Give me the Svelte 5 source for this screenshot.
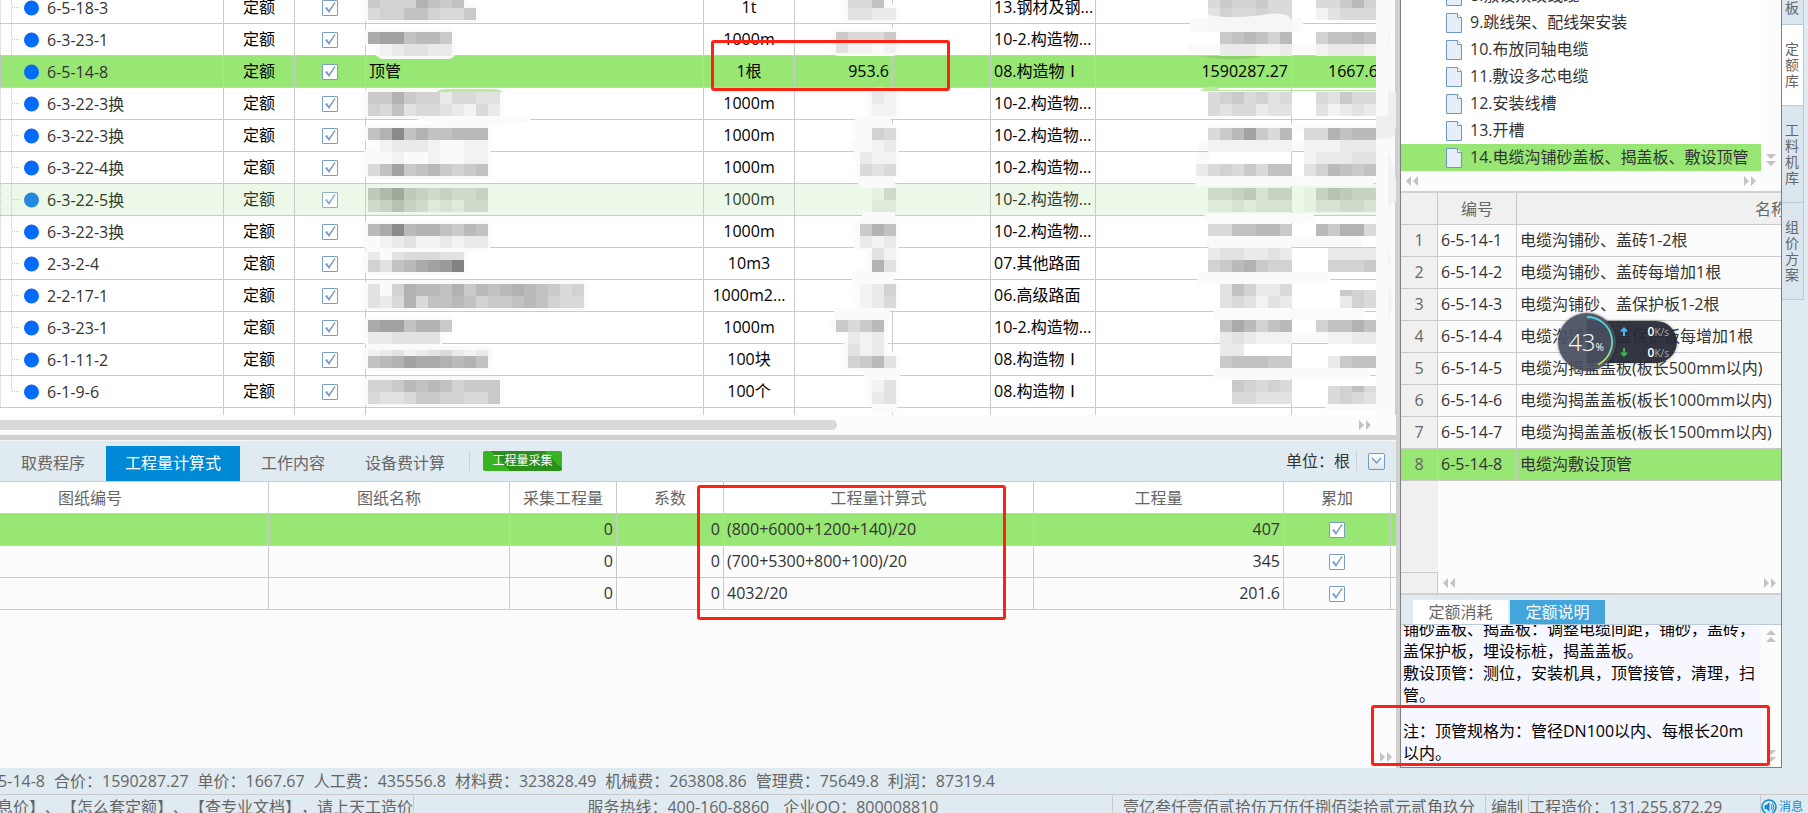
<script lang="ts">
	type Patch = { x: number; y: number; cells: string; green?: boolean };

	const items = [
		{ code: '6-5-18-3', name: '', unit: '1t', kind: '13.钢材及钢...' },
		{ code: '6-3-23-1', name: '', unit: '1000m', kind: '10-2.构造物...' },
		{ code: '6-5-14-8', name: '顶管', unit: '1根', qty: '953.6', kind: '08.构造物Ⅰ', total: '1590287.27', price: '1667.67', state: 'selected' },
		{ code: '6-3-22-3换', name: '', unit: '1000m', kind: '10-2.构造物...' },
		{ code: '6-3-22-3换', name: '', unit: '1000m', kind: '10-2.构造物...' },
		{ code: '6-3-22-4换', name: '', unit: '1000m', kind: '10-2.构造物...' },
		{ code: '6-3-22-5换', name: '', unit: '1000m', kind: '10-2.构造物...', state: 'hovered' },
		{ code: '6-3-22-3换', name: '', unit: '1000m', kind: '10-2.构造物...' },
		{ code: '2-3-2-4', name: '', unit: '10m3', kind: '07.其他路面' },
		{ code: '2-2-17-1', name: '', unit: '1000m2...', kind: '06.高级路面' },
		{ code: '6-3-23-1', name: '', unit: '1000m', kind: '10-2.构造物...' },
		{ code: '6-1-11-2', name: '', unit: '100块', kind: '08.构造物Ⅰ' },
		{ code: '6-1-9-6', name: '', unit: '100个', kind: '08.构造物Ⅰ' }
	];

	const formulas = [
		{ expr: '(800+6000+1200+140)/20', value: '407' },
		{ expr: '(700+5300+800+100)/20', value: '345' },
		{ expr: '4032/20', value: '201.6' }
	];

	const chapters = [
		'8.敷设双绞线缆',
		'9.跳线架、配线架安装',
		'10.布放同轴电缆',
		'11.敷设多芯电缆',
		'12.安装线槽',
		'13.开槽',
		'14.电缆沟铺砂盖板、揭盖板、敷设顶管'
	];

	const quotas = [
		'电缆沟铺砂、盖砖1-2根',
		'电缆沟铺砂、盖砖每增加1根',
		'电缆沟铺砂、盖保护板1-2根',
		'电缆沟铺砂、盖保护板每增加1根',
		'电缆沟揭盖盖板(板长500mm以内)',
		'电缆沟揭盖盖板(板长1000mm以内)',
		'电缆沟揭盖盖板(板长1500mm以内)',
		'电缆沟敷设顶管'
	];

	const costs = [
		['合价', '1590287.27'],
		['单价', '1667.67'],
		['人工费', '435556.8'],
		['材料费', '323828.49'],
		['机械费', '263808.86'],
		['管理费', '75649.8'],
		['利润', '87319.4']
	];

	const tabs = ['取费程序', '工程量计算式', '工作内容', '设备费计算'];
	const sideTabs = ['定额库', '工料机库', '组价方案'];

	// masked values: one hex digit per 12px block, 0 is dark and f is nearly white
	const patches: Patch[] = [
		{ x: 368, y: -4, cells: '9aaa6898' },
		{ x: 368, y: 8, cells: 'baa88abb9' },
		{ x: 368, y: 32, cells: '5448779' },
		{ x: 380, y: 44, cells: 'edccdd' },
		{ x: 368, y: 92, cells: '9969aadbbcc' },
		{ x: 368, y: 104, cells: 'ab8cbbcdebd' },
		{ x: 368, y: 128, cells: '8618688777' },
		{ x: 380, y: 140, cells: 'edddeffee' },
		{ x: 368, y: 152, cells: 'ffeffeffee' },
		{ x: 368, y: 164, cells: 'b849879a98' },
		{ x: 368, y: 188, cells: '86489a9aa9', green: true },
		{ x: 368, y: 200, cells: 'a979acbcaa', green: true },
		{ x: 368, y: 224, cells: '7517668978' },
		{ x: 368, y: 236, cells: 'fedceededd' },
		{ x: 368, y: 252, cells: 'dfcbbbcc' },
		{ x: 368, y: 260, cells: 'ac875430' },
		{ x: 368, y: 284, cells: 'cfa6778697876789ba' },
		{ x: 368, y: 296, cells: 'cdb6b8878a99878abb' },
		{ x: 368, y: 320, cells: '5448669' },
		{ x: 368, y: 332, cells: 'ddcccc' },
		{ x: 368, y: 350, cells: 'edcedcbded' },
		{ x: 368, y: 356, cells: '8764556768' },
		{ x: 368, y: 380, cells: 'aa97878a999' },
		{ x: 368, y: 392, cells: 'bccb99aabb9' },
		{ x: 848, y: -4, cells: 'bb8' },
		{ x: 848, y: 8, cells: 'ccdd' },
		{ x: 836, y: 32, cells: '9bbb9' },
		{ x: 836, y: 41, cells: 'ceefe' },
		{ x: 872, y: 92, cells: 'de' },
		{ x: 872, y: 104, cells: 'ee' },
		{ x: 860, y: 128, cells: 'fab' },
		{ x: 860, y: 140, cells: 'fed' },
		{ x: 860, y: 152, cells: 'dee' },
		{ x: 860, y: 164, cells: 'bcb' },
		{ x: 872, y: 188, cells: 'da', green: true },
		{ x: 872, y: 200, cells: 'cc', green: true },
		{ x: 860, y: 224, cells: '968' },
		{ x: 860, y: 236, cells: 'ded' },
		{ x: 872, y: 248, cells: 'ce' },
		{ x: 872, y: 260, cells: '6c' },
		{ x: 860, y: 284, cells: 'eda' },
		{ x: 860, y: 296, cells: 'edb' },
		{ x: 836, y: 320, cells: '9b97' },
		{ x: 848, y: 332, cells: 'ded' },
		{ x: 848, y: 344, cells: 'ced' },
		{ x: 848, y: 356, cells: 'a97c' },
		{ x: 872, y: 380, cells: 'ec' },
		{ x: 872, y: 392, cells: 'dc' },
		{ x: 1208, y: -4, cells: 'b9aa9bb' },
		{ x: 1208, y: 8, cells: 'cabbabb' },
		{ x: 1220, y: 32, cells: '9878a7a'.slice(0, 6) },
		{ x: 1220, y: 44, cells: 'dddeed' },
		{ x: 1208, y: 92, cells: 'ba9bacb' },
		{ x: 1208, y: 104, cells: 'bcbbdcc' },
		{ x: 1208, y: 128, cells: 'b9749b7' },
		{ x: 1208, y: 140, cells: 'eeeeeee' },
		{ x: 1196, y: 164, cells: 'dbab9b8a'.slice(0, 7) + '8' },
		{ x: 1208, y: 188, cells: 'aa98b99', green: true },
		{ x: 1208, y: 200, cells: 'ccbcbbb', green: true },
		{ x: 1208, y: 224, cells: 'bb88779' },
		{ x: 1208, y: 248, cells: 'dccddcd' },
		{ x: 1208, y: 260, cells: 'a9769aa' },
		{ x: 1220, y: 284, cells: 'c8addb' },
		{ x: 1220, y: 296, cells: 'cbcecd' },
		{ x: 1220, y: 320, cells: '857a87' },
		{ x: 1220, y: 332, cells: 'dcdeee' },
		{ x: 1220, y: 344, cells: 'dd' },
		{ x: 1220, y: 356, cells: '988899' },
		{ x: 1232, y: 380, cells: '9abab' },
		{ x: 1232, y: 392, cells: 'bbccc' },
		{ x: 1316, y: -4, cells: 'bb97a' },
		{ x: 1316, y: 8, cells: 'ecbbb' },
		{ x: 1316, y: 32, cells: 'a8878' },
		{ x: 1316, y: 44, cells: 'eddde' },
		{ x: 1316, y: 92, cells: 'bc9bb' },
		{ x: 1316, y: 104, cells: 'cedcd' },
		{ x: 1304, y: 128, cells: 'bb6877' },
		{ x: 1304, y: 140, cells: 'eeeddd' },
		{ x: 1304, y: 152, cells: 'edddcc' },
		{ x: 1304, y: 164, cells: 'ca7898' },
		{ x: 1304, y: 188, cells: 'd97899', green: true },
		{ x: 1304, y: 200, cells: 'dbbaab', green: true },
		{ x: 1316, y: 224, cells: '7966b' },
		{ x: 1328, y: 248, cells: 'dddd' },
		{ x: 1328, y: 260, cells: 'aaa9' },
		{ x: 1340, y: 290, cells: '9ab' },
		{ x: 1340, y: 296, cells: 'dab' },
		{ x: 1316, y: 320, cells: 'a8868' },
		{ x: 1328, y: 332, cells: 'eedd' },
		{ x: 1328, y: 356, cells: 'd988' },
		{ x: 1328, y: 386, cells: 'ba8b' },
		{ x: 1328, y: 392, cells: 'babc' }
	];

	// wide eraser strokes that run between the masked values
	const smears = [
		[1190, 18, 113, 14], [1187, 44, 189, 9], [1208, 124, 168, 6], [1198, 140, 142, 11],
		[1196, 152, 14, 24], [1195, 176, 110, 10], [1304, 176, 70, 10], [1204, 213, 110, 10],
		[1206, 236, 156, 11], [1208, 246, 84, 12], [1197, 272, 133, 12], [1213, 309, 152, 10],
		[1214, 332, 162, 11], [1213, 368, 157, 11], [1325, 403, 58, 8], [855, 116, 36, 12],
		[852, 140, 43, 12], [858, 176, 37, 12], [862, 212, 33, 12], [854, 236, 42, 14],
		[852, 270, 42, 14], [834, 308, 56, 12], [848, 332, 40, 22], [864, 368, 36, 12],
		[872, 380, 25, 33]
	];

	function shade(digit: string, green?: boolean) {
		const level = 130 + parseInt(digit, 16) * 8;
		return green ? `rgb(${level - 4}, ${level + 8}, ${level - 8})` : `rgb(${level}, ${level}, ${level})`;
	}
</script>

{#snippet arrows(dir: 'left' | 'right' | 'up' | 'down')}
	<svg class="arrows" width="14" height="14" viewBox="0 0 14 14" aria-hidden="true">
		<g transform="rotate({{ right: 0, down: 90, left: 180, up: 270 }[dir]} 7 7)">
			<path d="M1 2l5 5-5 5zM8 2l5 5-5 5z" fill="#c3c3c3" />
		</g>
	</svg>
{/snippet}

<div class="app">
	<div class="workspace">
		<main class="left">
			<section class="budget">
				<div class="grid-view">
					<table class="grid items">
						<colgroup>
							<col style:width="224px" /><col style:width="71px" /><col style:width="71px" />
							<col style:width="338px" /><col style:width="91px" /><col style:width="98px" />
							<col style:width="98px" /><col style:width="105px" /><col style:width="196px" /><col />
						</colgroup>
						<tbody>
							{#each items as item, i}
								<tr class={item.state}>
									<td class="tree-cell">
										<div class="node">
											<svg width="47" height="31" viewBox="0 0 47 31" aria-hidden="true">
												<g stroke="#c8c8c8" stroke-dasharray="1 1">
													<path d="M.5 0v31" />
													<path d={i === items.length - 1 ? 'M11.5 0v15.5' : 'M11.5 0v31'} />
													<path d="M12 15.5h8" />
												</g>
												<circle cx="31.5" cy="16" r="7.5" fill={item.state === 'hovered' ? '#2487e0' : '#006cf7'} />
											</svg>
											<span>{item.code}</span>
										</div>
									</td>
									<td class="center">定额</td>
									<td class="center check-cell"><input type="checkbox" checked aria-label={item.code} /></td>
									<td>{item.name}</td>
									<td class="center">{item.unit}</td>
									<td class="right">{item.qty ?? ''}</td>
									<td></td>
									<td>{item.kind}</td>
									<td class="right">{item.total ?? ''}</td>
									<td class="price">{item.price ?? ''}</td>
								</tr>
							{/each}
							<tr class="stub">
								{#each Array(10) as _}<td></td>{/each}
							</tr>
						</tbody>
					</table>
				</div>
				<div class="gutter"></div>

				<svg class="mask" aria-hidden="true">
					<g fill="#fafafa">
						{#each patches as p}
							{#if !p.green && p.x < 1190}
								<rect x={p.x - 5} y={p.y - 4} width={p.cells.length * 12 + 9} height="19" rx="8" />
							{/if}
						{/each}
						{#each smears as [x, y, width, height]}
							<rect {x} {y} {width} {height} rx="4" />
						{/each}
						<rect x="1376" y="0" width="19" height="415" />
						<path d="M1388 91q13 0 13 14l-7 30q-3 6-18 3v-22h12z" fill="#eeefef" />
						<path d="M1388 154q9 14 9 45q-3 7-9 7z" fill="#f1f2f2" />
						<path d="M1388 32q5 7 0 14zM1388 250q6 8 0 16zM1388 286q10 10 0 34z" fill="#f3f4f4" />
						<path d="M415 119q60-6 116-2q2 6-20 7q-60 4-96-5z" />
					</g>
					{#each patches as p}
						{#each p.cells.split('') as c, i}
							<rect x={p.x + i * 12} y={p.y} width="12" height="12" fill={shade(c, p.green)} />
						{/each}
					{/each}
					<path d="M1208 15q30 5 60-1q20-2 24 6v12h-84z" fill="#f6f6f6" />
					<path d="M436 92q4-3 10-3h46q8 0 11 3z" fill="#b9eba0" />
					<path d="M866 91q14-9 25 0z" fill="#b9eba0" />
					<path d="M1200 91q10-9 20-1h156v1z" fill="#b9eba0" />
					<path d="M1200 56h62q-24 6-54 1z" fill="#8bd068" />
				</svg>
				<div class="marker unit-marker"></div>
			</section>

			<div class="hscroll">
				<div class="thumb"></div>
				{@render arrows('right')}
			</div>

			<section class="detail">
				<nav class="tabbar">
					{#each tabs as tab, i}
						<button type="button" class={['tab', i === 1 && 'active']}>{tab}</button>
					{/each}
					<span class="divider"></span>
					<button type="button" class="collect">工程量采集</button>
					<span class="unit">单位：根</span>
					<span class="divider"></span>
					<button type="button" class="expand" aria-label="展开">
						<svg width="11" height="8" viewBox="0 0 11 8"><path d="M1 1l4.500 5L10 1" fill="none" stroke="#6f9ac8" stroke-width="1.500" /></svg>
					</button>
				</nav>
				<div class="formulas">
					<table class="grid">
						<colgroup>
							<col style:width="269px" /><col style:width="241px" /><col style:width="107px" />
							<col style:width="107px" /><col style:width="310px" /><col style:width="250px" />
							<col style:width="107px" /><col />
						</colgroup>
						<thead>
							<tr>
								<th class="offset">图纸编号</th>
								<th>图纸名称</th>
								<th>采集工程量</th>
								<th>系数</th>
								<th>工程量计算式</th>
								<th>工程量</th>
								<th>累加</th>
								<th></th>
							</tr>
						</thead>
						<tbody>
							{#each formulas as f, i}
								<tr class={{ selected: i === 0 }}>
									<td></td>
									<td></td>
									<td class="right">0</td>
									<td class="right">0</td>
									<td>{f.expr}</td>
									<td class="right">{f.value}</td>
									<td class="center check-cell"><input type="checkbox" checked aria-label="累加" /></td>
									<td></td>
								</tr>
							{/each}
						</tbody>
					</table>
					<div class="marker formula-marker"></div>
					<div class="corner">{@render arrows('right')}</div>
				</div>
			</section>
		</main>

		<aside class="library">
			<div class="chapters">
				<ul>
					{#each chapters as chapter, i}
						<li class={{ selected: i === chapters.length - 1 }}>
							<svg width="16" height="20" viewBox="0 0 16 20" aria-hidden="true">
								<path d="M.5.5h11l4 4v15H.5z" fill="#e6eef9" stroke="#6f97c4" />
								<path d="M11.500.5v4h4" fill="#fff" stroke="#6f97c4" />
							</svg>
							<span>{chapter}</span>
						</li>
					{/each}
				</ul>
				<div class="vscroll">{@render arrows('down')}</div>
			</div>
			<div class="pager">{@render arrows('left')}{@render arrows('right')}</div>

			<div class="quotas">
				<table class="grid">
					<colgroup><col style:width="37px" /><col style:width="79px" /><col /></colgroup>
					<thead>
						<tr><th></th><th>编号</th><th class="name-head">名称</th></tr>
					</thead>
					<tbody>
						{#each quotas as quota, i}
							<tr class={{ selected: i === quotas.length - 1 }}>
								<td class="num">{i + 1}</td>
								<td>6-5-14-{i + 1}</td>
								<td>{quota}</td>
							</tr>
						{/each}
					</tbody>
				</table>
				<div class="rest"></div>
				<div class="pager foot">{@render arrows('left')}{@render arrows('right')}</div>
			</div>

			<nav class="note-tabs">
				<button type="button">定额消耗</button>
				<button type="button" class="active">定额说明</button>
			</nav>
			<div class="notes">
				<div class="note-text">
					<p>铺砂盖板、揭盖板：调整电缆间距，铺砂，盖砖，盖保护板，埋设标桩，揭盖盖板。</p>
					<p>敷设顶管：测位，安装机具，顶管接管，清理，扫管。</p>
					<p class="remark">注：顶管规格为：管径DN100以内、每根长20m以内。</p>
				</div>
				<div class="vscroll both">{@render arrows('up')}{@render arrows('down')}</div>
				<div class="marker note-marker"></div>
			</div>

			<div class="speed">
				<div class="rates">
					<svg width="8" height="9" viewBox="0 0 8 9"><path d="M4 9V2M1 4.500l3-3 3 3" fill="none" stroke="#4ab6f5" stroke-width="2" /></svg>
					<span><b>0</b>K/s</span>
					<svg width="8" height="9" viewBox="0 0 8 9"><path d="M4 0v7M1 4.500l3 3 3-3" fill="none" stroke="#37b34a" stroke-width="2" /></svg>
					<span><b>0</b>K/s</span>
				</div>
				<div class="ball">
					<svg width="58" height="58" viewBox="0 0 58 58" aria-hidden="true">
						<defs>
							<linearGradient id="ring" x1="0" y1="0" x2="0" y2="1">
								<stop offset="0" stop-color="#3fd9e6" />
								<stop offset="0.600" stop-color="#66dfa8" />
								<stop offset="1" stop-color="#c8e05a" />
							</linearGradient>
						</defs>
						<path d="M29 4a25 25 0 0 1 11 47.500" fill="none" stroke="url(#ring)" stroke-width="1.800" />
					</svg>
					<span>43<small>%</small></span>
				</div>
			</div>
		</aside>

		<nav class="side">
			<button type="button" class="first">板</button>
			{#each sideTabs as tab, i}
				<button type="button" class={{ active: i === 0 }}>{tab}</button>
			{/each}
		</nav>
	</div>

	<footer>
		<div class="costs">
			<span class="code">6-5-14-8</span>
			{#each costs as [label, value]}
				<span>{label}：{value}</span>
			{/each}
		</div>
		<div class="status">
			<span class="tips">息价】、【怎么套定额】、【查专业文档】，请上天工造价</span>
			<span class="contact"><span>服务热线：400-160-8860</span><span>企业QQ：800008810</span></span>
			<span class="words">壹亿叁仟壹佰贰拾伍万伍仟捌佰柒拾贰元贰角玖分</span>
			<span class="mode">编制</span>
			<span class="sum">工程造价：131,255,872.29</span>
			<a href="#messages">
				<svg width="16" height="16" viewBox="0 0 16 16" aria-hidden="true">
					<circle cx="8" cy="8" r="7" fill="none" stroke="#0b8ad6" stroke-width="1.500" />
					<path d="M3.500 6h2l3-3v10l-3-3h-2z" fill="#0b8ad6" />
					<path d="M10 5.500q2 2.500 0 5M11.500 4q3 4 0 8" fill="none" stroke="#0b8ad6" />
				</svg>消息
			</a>
		</div>
	</footer>
</div>

<style>
	:global(body) {
		margin: 0;
	}

	.app {
		--line: #cacaca;
		--green: #98e673;
		--pale: #e0eaf1;
		min-height: 100vh;
		display: flex;
		flex-direction: column;
		overflow: hidden;
		background: var(--pale);
		color: #333;
		font: 16px/24px 'Open Sans', 'Noto Sans CJK SC', sans-serif;
		text-spacing-trim: space-all;
	}

	button {
		border: 0;
		padding: 0;
		font: inherit;
		color: #666;
		background: none;
	}

	.workspace {
		flex: 1;
		display: flex;
	}

	.left {
		flex: 1;
		min-width: 0;
		display: flex;
		flex-direction: column;
		border-right: 4px solid #d0d0d0;
		background: #fcfcfc;
	}

	.grid {
		width: 100%;
		table-layout: fixed;
		border-collapse: separate;
		border-spacing: 0;
	}

	.grid td,
	.grid th {
		box-sizing: border-box;
		height: 32px;
		padding: 0 3px 2px;
		overflow: hidden;
		white-space: nowrap;
		font-weight: normal;
		text-align: left;
		border-right: 1px solid var(--line);
		border-bottom: 1px solid var(--line);
	}

	.grid th {
		padding-bottom: 0;
		color: #666;
		text-align: center;
	}

	.grid .center {
		text-align: center;
	}

	.grid .right {
		text-align: right;
	}

	.grid .check-cell {
		padding: 0;
	}

	.grid .selected td {
		background: var(--green);
	}

	.grid td:last-child,
	.grid th:last-child {
		border-right: 0;
	}

	input[type='checkbox'] {
		appearance: none;
		box-sizing: border-box;
		display: block;
		width: 16px;
		height: 16px;
		margin: 0 auto;
		border: 1px solid #7a9dc4;
		border-radius: 1px;
		background: #fff url("data:image/svg+xml,%3Csvg xmlns='http://www.w3.org/2000/svg' viewBox='0 0 14 14'%3E%3Cpath d='M2 7l2-1 2 3L11.500 1l1 1L6 12z' fill='%237a9dc4'/%3E%3C/svg%3E");
	}

	.budget {
		position: relative;
		display: flex;
	}

	.grid-view {
		flex: 1;
		min-width: 0;
		overflow: hidden;
		background: #fff;
	}

	.items {
		margin-top: -8px;
		color: #000;
	}

	.items .hovered td {
		background: #ecf9e8;
		color: #2c3b29;
	}

	.items .hovered input {
		opacity: 0.8;
	}

	.items .tree-cell {
		padding: 0;
		color: #333;
	}

	.items .stub td {
		height: 7px;
		padding: 0;
		border-bottom: 0;
	}

	.items .price {
		padding-left: 36px;
		text-overflow: clip;
	}

	.node {
		display: flex;
		align-items: center;
		height: 31px;
	}

	.gutter {
		box-sizing: border-box;
		width: 20px;
		border-right: 1px solid #c3cfda;
		background: #fcfcfc;
	}

	.mask {
		position: absolute;
		inset: 0;
		width: 100%;
		height: 100%;
		pointer-events: none;
	}

	.marker {
		position: absolute;
		box-sizing: border-box;
		border: 3px solid #ff2213;
		border-radius: 3px;
		pointer-events: none;
	}

	.unit-marker {
		left: 711px;
		top: 40px;
		width: 239px;
		height: 51px;
	}

	.hscroll {
		display: flex;
		align-items: center;
		justify-content: space-between;
		height: 20px;
		padding-right: 24px;
		border-bottom: 5px solid #d0d0d0;
	}

	.thumb {
		width: 61%;
		height: 10px;
		border-radius: 0 5px 5px 0;
		background: #d9d9d9;
	}

	.arrows {
		display: block;
		flex: none;
	}

	.detail {
		flex: 1;
		display: flex;
		flex-direction: column;
	}

	.tabbar {
		display: flex;
		align-items: center;
		height: 40px;
		border-top: 1px solid #f6f6f6;
		border-bottom: 1px solid #c3cfda;
		background: var(--pale);
	}

	.tab {
		align-self: flex-end;
		height: 35px;
		padding: 0 20px 2px;
	}

	.tab:first-child {
		padding-left: 21px;
	}

	.tab.active {
		margin: 0 1px;
		padding: 0 19px 2px;
		color: #fff;
		background: #0089d6;
	}

	.tab:nth-child(4) {
		padding-right: 24px;
	}

	.divider {
		width: 1px;
		height: 20px;
		background: #c9d3dc;
	}

	.collect {
		width: 79px;
		height: 20px;
		margin: 0 auto 0 13px;
		border-radius: 2px;
		font-size: 12px;
		line-height: 18px;
		color: #fff;
		background: linear-gradient(45deg, #38b321 28%, #2b901a 28%, #2b901a 82%, #38b321 82%);
	}

	.unit {
		margin-right: 6px;
	}

	.expand {
		display: grid;
		place-items: center;
		width: 17px;
		height: 17px;
		margin: 0 11px;
		border: 1px solid #6f9ac8;
		border-radius: 2px;
		background: linear-gradient(#fff, #dce6ee);
	}

	.formulas {
		position: relative;
		flex: 1;
	}

	.formulas th {
		background: #fff;
	}

	.formulas .offset {
		padding-right: 91px;
	}

	.formula-marker {
		left: 697px;
		top: 3px;
		width: 309px;
		height: 135px;
	}

	.corner {
		position: absolute;
		right: 3px;
		bottom: 4px;
	}

	.library {
		position: relative;
		flex: 0 0 380px;
		display: flex;
		flex-direction: column;
		border: solid #808080;
		border-width: 0 1px;
		background: #fcfcfc;
	}

	.chapters {
		display: flex;
		overflow: hidden;
	}

	.chapters ul {
		flex: 1;
		margin: -18px 0 0;
		padding: 0;
		list-style: none;
		background: #fff;
	}

	.chapters li {
		display: flex;
		align-items: center;
		gap: 8px;
		height: 27px;
		padding-left: 45px;
	}

	.chapters li span {
		padding-bottom: 2px;
	}

	.chapters .selected {
		background: var(--green);
	}

	.vscroll {
		display: flex;
		flex-direction: column;
		justify-content: flex-end;
		align-items: center;
		width: 20px;
		padding: 4px 0;
		box-sizing: border-box;
	}

	.vscroll.both {
		justify-content: space-between;
	}

	.pager {
		display: flex;
		align-items: center;
		justify-content: space-between;
		height: 20px;
		padding: 0 24px 0 4px;
		border-bottom: 2px solid #d0d0d0;
	}

	.quotas {
		flex: 1;
		display: flex;
		flex-direction: column;
	}

	.quotas th,
	.quotas .num {
		background: #f0f0f0;
	}

	.quotas .num {
		color: #666;
		text-align: center;
	}

	.quotas .name-head {
		padding-left: 238px;
		text-align: left;
	}

	.rest {
		flex: 1;
		width: 37px;
		box-sizing: border-box;
		border-bottom: 1px solid var(--line);
		background: #f0f0f0;
	}

	.pager.foot {
		padding: 0 4px 0 41px;
		background: linear-gradient(90deg, #f0f0f0 36px, var(--line) 36px, var(--line) 37px, transparent 37px);
	}

	.note-tabs {
		display: flex;
		gap: 2px;
		padding: 5px 12px 0;
		border-bottom: 1px solid #b9cbd9;
		background: var(--pale);
	}

	.note-tabs button {
		width: 95px;
		height: 24px;
		background: #fff;
	}

	.note-tabs .active {
		color: #fff;
		background: #42a6dd;
	}

	.notes {
		position: relative;
		display: flex;
		height: 142px;
		border-bottom: 1px solid #808080;
	}

	.note-text {
		flex: 1;
		overflow: hidden;
		padding: 0 5px 0 2px;
		line-height: 22px;
		color: #000;
		background: #f7f7ff;
	}

	.note-text p {
		margin: 0;
	}

	.note-text p:first-child {
		margin-top: -7px;
	}

	.note-text .remark {
		margin-top: 14px;
	}

	.note-marker {
		left: -30px;
		right: 11px;
		bottom: 1px;
		height: 61px;
	}

	.speed {
		position: absolute;
		left: 157px;
		top: 313px;
		display: flex;
		align-items: center;
	}

	.ball {
		position: relative;
		width: 58px;
		height: 58px;
		border-radius: 50%;
		background: rgba(72, 77, 95, 0.92);
		box-shadow: 0 0 3px rgba(0, 0, 0, 0.5);
		color: #fff;
		order: -1;
	}

	.ball span {
		position: absolute;
		inset: 0;
		padding-right: 2px;
		font: 300 24px/58px 'Open Sans', sans-serif;
		text-align: center;
		white-space: nowrap;
	}

	.ball small {
		font-size: 10px;
		font-weight: 400;
	}

	.rates {
		display: grid;
		grid-template-columns: 8px 1fr;
		align-items: center;
		column-gap: 8px;
		box-sizing: border-box;
		width: 90px;
		height: 42px;
		margin-left: -29px;
		padding: 0 8px 0 33px;
		border-radius: 0 21px 21px 0;
		background: rgba(38, 41, 53, 0.94);
		box-shadow: 0 0 3px rgba(0, 0, 0, 0.4);
		font-size: 10px;
		line-height: 20px;
		color: #a9abb3;
		text-align: right;
	}

	.rates b {
		font-size: 12px;
		font-weight: 600;
		color: #fff;
	}

	.side {
		flex: 0 0 26px;
		display: flex;
		flex-direction: column;
		align-items: flex-start;
	}

	.side button {
		box-sizing: border-box;
		width: 22px;
		padding: 16px 4px 16px 3px;
		border: solid #b9cbd9;
		border-width: 0 1px 1px 0;
		font-size: 14px;
		line-height: 16px;
		background: #dae5ee;
	}

	.side .first {
		height: 25px;
		padding: 0 4px 20px 3px;
	}

	.side .active {
		background: #fff;
	}

	.side button:not(.first) {
		word-break: break-all;
	}

	.costs,
	.status {
		display: flex;
		overflow: hidden;
		white-space: nowrap;
		color: #666;
	}

	.costs {
		gap: 9px;
		height: 26px;
		line-height: 26px;
		border-bottom: 1px solid var(--line);
	}

	.costs .code {
		width: 45px;
		display: flex;
		justify-content: flex-end;
	}

	.status {
		height: 18px;
	}

	.status > span {
		border-right: 1px solid var(--line);
	}

	.tips {
		width: 413px;
		display: flex;
		justify-content: flex-end;
	}

	.contact {
		flex: 1;
		display: flex;
		justify-content: center;
		gap: 14px;
	}

	.words {
		padding: 0 10px;
	}

	.mode {
		padding: 0 5px;
	}

	.sum {
		width: 231px;
	}

	.status a {
		display: flex;
		align-items: center;
		gap: 2px;
		margin-right: 5px;
		height: 24px;
		font-size: 12px;
		color: #0b8ad6;
		text-decoration: none;
	}
</style>
